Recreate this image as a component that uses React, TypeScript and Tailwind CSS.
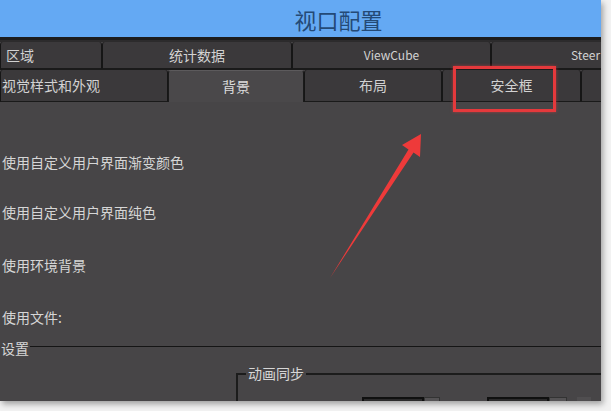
const cjk = "font-['Noto_Sans_CJK_SC','Noto_Sans',sans-serif]";

function Tab({ w, label, align = 'center', active = false, pl = 0, small = false }: { w: number; label?: string; align?: 'center' | 'left'; active?: boolean; pl?: number; small?: boolean }) {
  return (
    <div
      style={{ width: w, paddingLeft: pl }}
      className={`shrink-0 h-full flex items-center ${small ? 'text-[12px]' : 'text-[14px]'} ${align === 'center' ? 'justify-center' : 'justify-start'} ${
        active
          ? 'bg-[#4a484a] border-t border-[#5c5a5c] border-x border-x-[#1a1a1a] text-[#dcdcdc]'
          : 'bg-[#3b393b] border-x border-[#161616] border-b border-b-[#1a1a1a] text-[#d2d2d2]'
      } rounded-t-[3px]`}
    >
      {label}
    </div>
  );
}

function Row({ children, mt }: { children: React.ReactNode; mt: number }) {
  return (
    <div style={{ marginTop: mt }} className="h-[20px] flex items-center pl-[2px] text-[14px] text-[#d6d6d6]">
      {children}
    </div>
  );
}

export default function App() {
  return (
    <div className={`w-[611px] h-[411px] bg-[#f2f2f2] overflow-hidden ${cjk}`}>
      <div className="relative w-[601px] h-[401px] bg-[#474547] overflow-hidden shadow-[2px_3px_6px_rgba(0,0,0,0.35)] flex flex-col">
        <div className="h-[37px] shrink-0 bg-[#64a9f3] flex items-center justify-center pl-[76px] text-[22px] text-[#244a76] leading-none">
          视口配置
        </div>
        <div className="h-[5px] shrink-0 bg-[#1c1c1c] border-b-2 border-[#2c2b2c]" />

        <div className="h-[27px] shrink-0 flex">
          <Tab w={102} label="区域" align="left" pl={5} />
          <Tab w={190} label="统计数据" />
          <Tab w={199} label="ViewCube" small />
          <Tab w={200} label="Steer" align="left" pl={79} small />
        </div>
        <div className="h-[33px] shrink-0 flex border-t border-[#1a1a1a]">
          <Tab w={168} label="视觉样式和外观" align="left" pl={1} />
          <Tab w={136} label="背景" active />
          <Tab w={138} label="布局" />
          <Tab w={139} label="安全框" />
          <Tab w={60} />
        </div>

        <div className="flex-1 flex flex-col">
          <Row mt={50}>使用自定义用户界面渐变颜色</Row>
          <Row mt={30}>使用自定义用户界面纯色</Row>
          <Row mt={33}>使用环境背景</Row>
          <Row mt={32}>使用文件:</Row>
          <div className="mt-[11px] h-[20px] flex items-center pl-[1px] text-[14px] text-[#d6d6d6]">
            <span>设置</span>
            <div className="flex-1 ml-[1px] -mt-[4px] border-t border-[#151515]" />
          </div>
          <div className="relative ml-[236px] mt-[15px] h-[60px] border-t-2 border-l-2 border-[#1c1c1c]">
            <span className="absolute -top-[12px] left-[8px] px-[2px] bg-[#474547] text-[14px] text-[#d6d6d6] leading-[20px]">
              动画同步
            </span>
            <div className="flex mt-[22px]">
              <div className="ml-[124px] w-[62px] h-[20px] bg-[#2c2b2c] border-2 border-[#101010]" />
              <div className="w-[16px] h-[20px] bg-[#555355] border border-[#333]" />
              <div className="ml-[47px] w-[62px] h-[20px] bg-[#2c2b2c] border-2 border-[#101010]" />
              <div className="w-[18px] h-[20px] bg-[#555355] border border-[#333]" />
              <div className="ml-[10px] w-[14px] h-[20px] bg-[#504e50]" />
            </div>
          </div>
        </div>

        <div className="absolute left-[453px] top-[66px] w-[103px] h-[46px] border-[3px] border-[#e5393c] shadow-[0_0_3px_rgba(229,57,60,0.6)]" />
        <svg className="absolute inset-0 pointer-events-none" width="601" height="401" viewBox="0 0 601 401">
          <polygon
            points="330,278 408.5,149.4 402,145 421,134 420,157 413.5,152.6"
            fill="#ee3a3a"
          />
        </svg>
      </div>
    </div>
  );
}
